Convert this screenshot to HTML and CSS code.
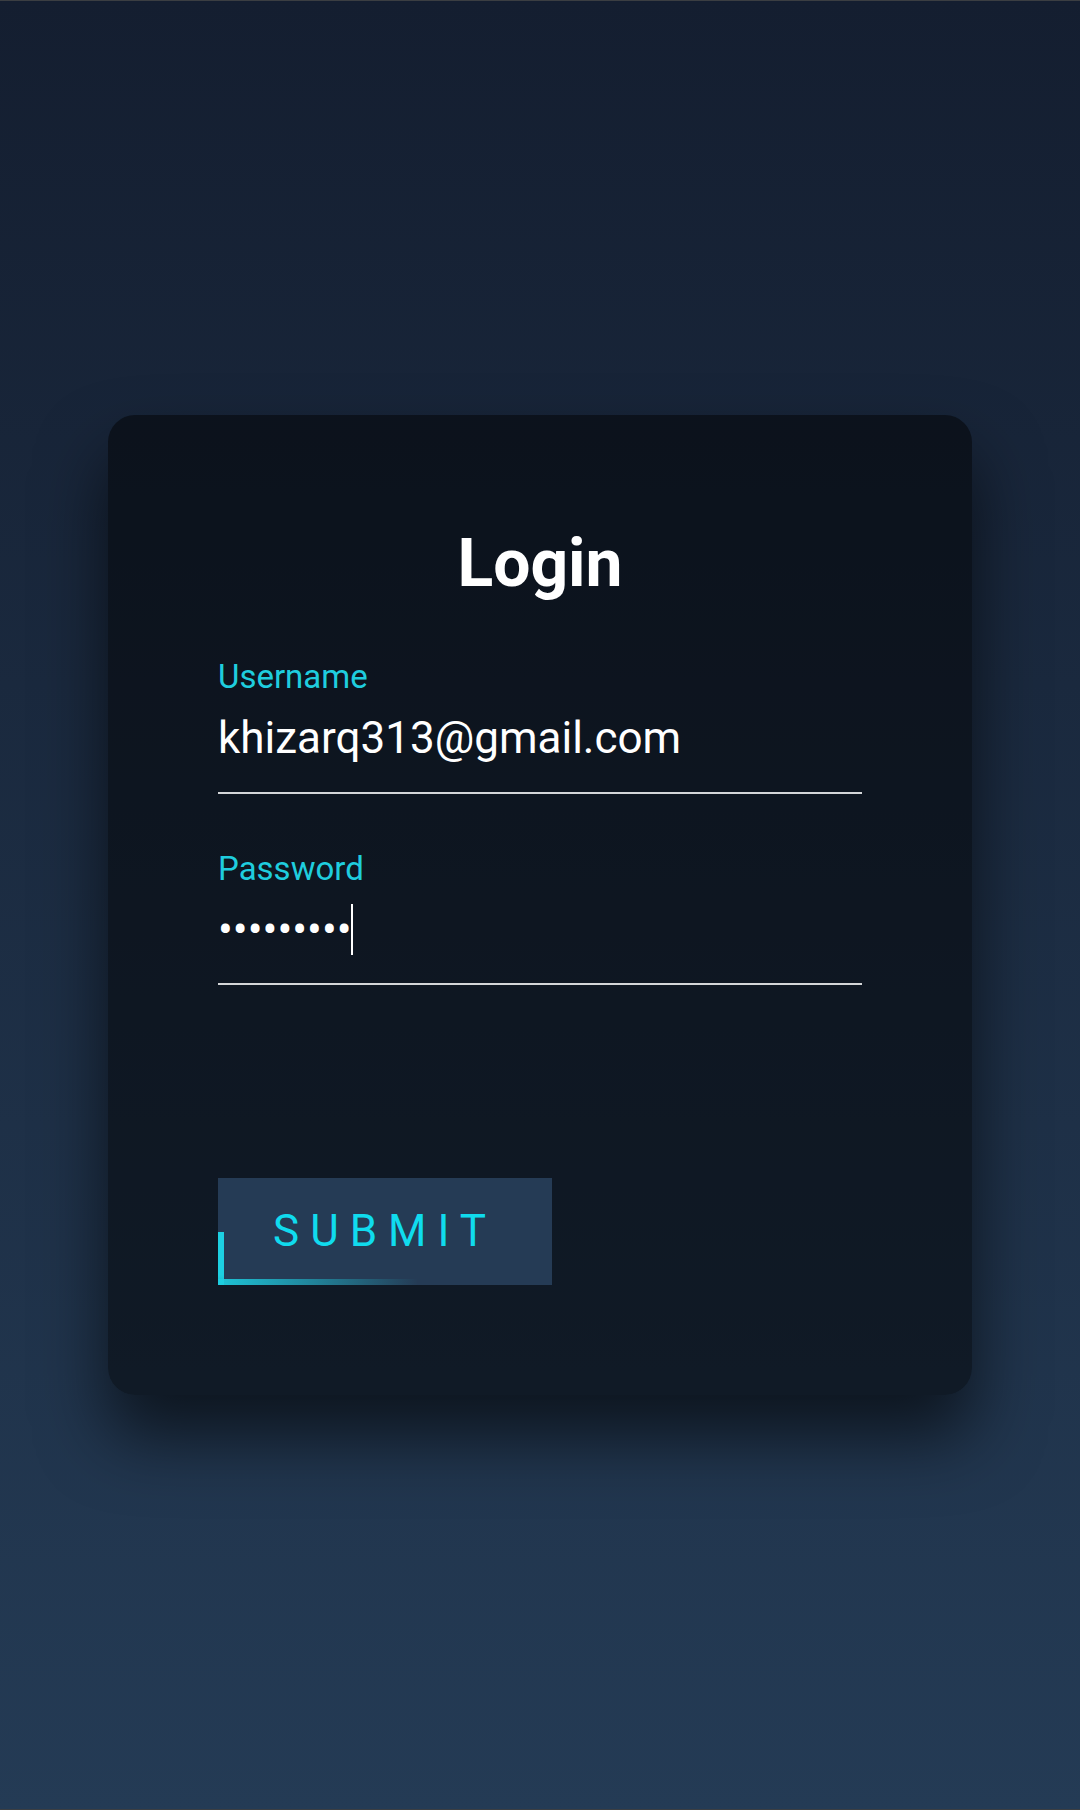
FILE: index.html
```html
<!DOCTYPE html>
<html lang="en">
<head>
<meta charset="utf-8">
<title>Login</title>
<link rel="stylesheet" href="styles.css">
</head>
<body>
<div class="page">
  <div class="login-box">
    <h2 class="title">Login</h2>
    <form class="form">
      <div class="user-box">
        <div class="field">khizarq313@gmail.com</div>
        <label class="label">Username</label>
      </div>
      <div class="user-box">
        <div class="field field-pass">•••••••••<span class="caret"></span></div>
        <label class="label">Password</label>
      </div>
      <a class="submit" href="#">
        <span class="line line-bottom"></span>
        <span class="line line-left"></span>
        Submit
      </a>
    </form>
  </div>
</div>
</body>
</html>
```

FILE: styles.css
```css
html, body {
  margin: 0;
  padding: 0;
}

body {
  font-family: Roboto, "Liberation Sans", sans-serif;
  background: linear-gradient(#141e30, #243b55);
  height: 1810px;
  box-sizing: border-box;
  border-top: 1px solid #3b3e42;
  border-bottom: 1px solid #3b3e42;
}

.page {
  height: 100%;
  display: flex;
  align-items: center;
  justify-content: center;
}

.login-box {
  width: 864px;
  box-sizing: border-box;
  padding: 110px;
  background: rgba(0, 0, 0, 0.5);
  border-radius: 27px;
  box-shadow: 0 41px 69px rgba(0, 0, 0, 0.6);
}

.title {
  margin: 0 0 82.5px;
  padding: 0;
  color: #fff;
  text-align: center;
  font-size: 66px;
  font-weight: 700;
  line-height: normal;
}

.form {
  display: flex;
  flex-direction: column;
  align-items: flex-start;
}

.user-box {
  position: relative;
  align-self: stretch;
}

.field {
  padding: 27.5px 0;
  font-size: 44px;
  line-height: normal;
  color: #fff;
  margin-bottom: 82.5px;
  border-bottom: 2.75px solid #d4d6d8;
  white-space: nowrap;
}

.caret {
  display: inline-block;
  width: 2px;
  height: 51.6px;
  background: #fff;
  vertical-align: top;
  margin-left: -1px;
}

.label {
  position: absolute;
  top: -55px;
  left: 0;
  padding: 27.5px 0;
  font-size: 33px;
  line-height: normal;
  color: #1fcdde;
}

.submit {
  position: relative;
  display: inline-block;
  margin-top: 110px;
  padding: 27.5px 55px;
  background: #253b55;
  color: #10dbee;
  font-size: 44px;
  line-height: normal;
  letter-spacing: 11px;
  text-transform: uppercase;
  text-decoration: none;
  overflow: hidden;
}

.line {
  position: absolute;
  display: block;
}

.line-bottom {
  bottom: 0;
  left: -40%;
  width: 100%;
  height: 5.5px;
  background: linear-gradient(90deg, #1dd0e2 35%, transparent);
}

.line-left {
  left: 0;
  top: 51%;
  width: 5.5px;
  height: 100%;
  background: linear-gradient(180deg, #1dd0e2 40%, transparent);
}
```
